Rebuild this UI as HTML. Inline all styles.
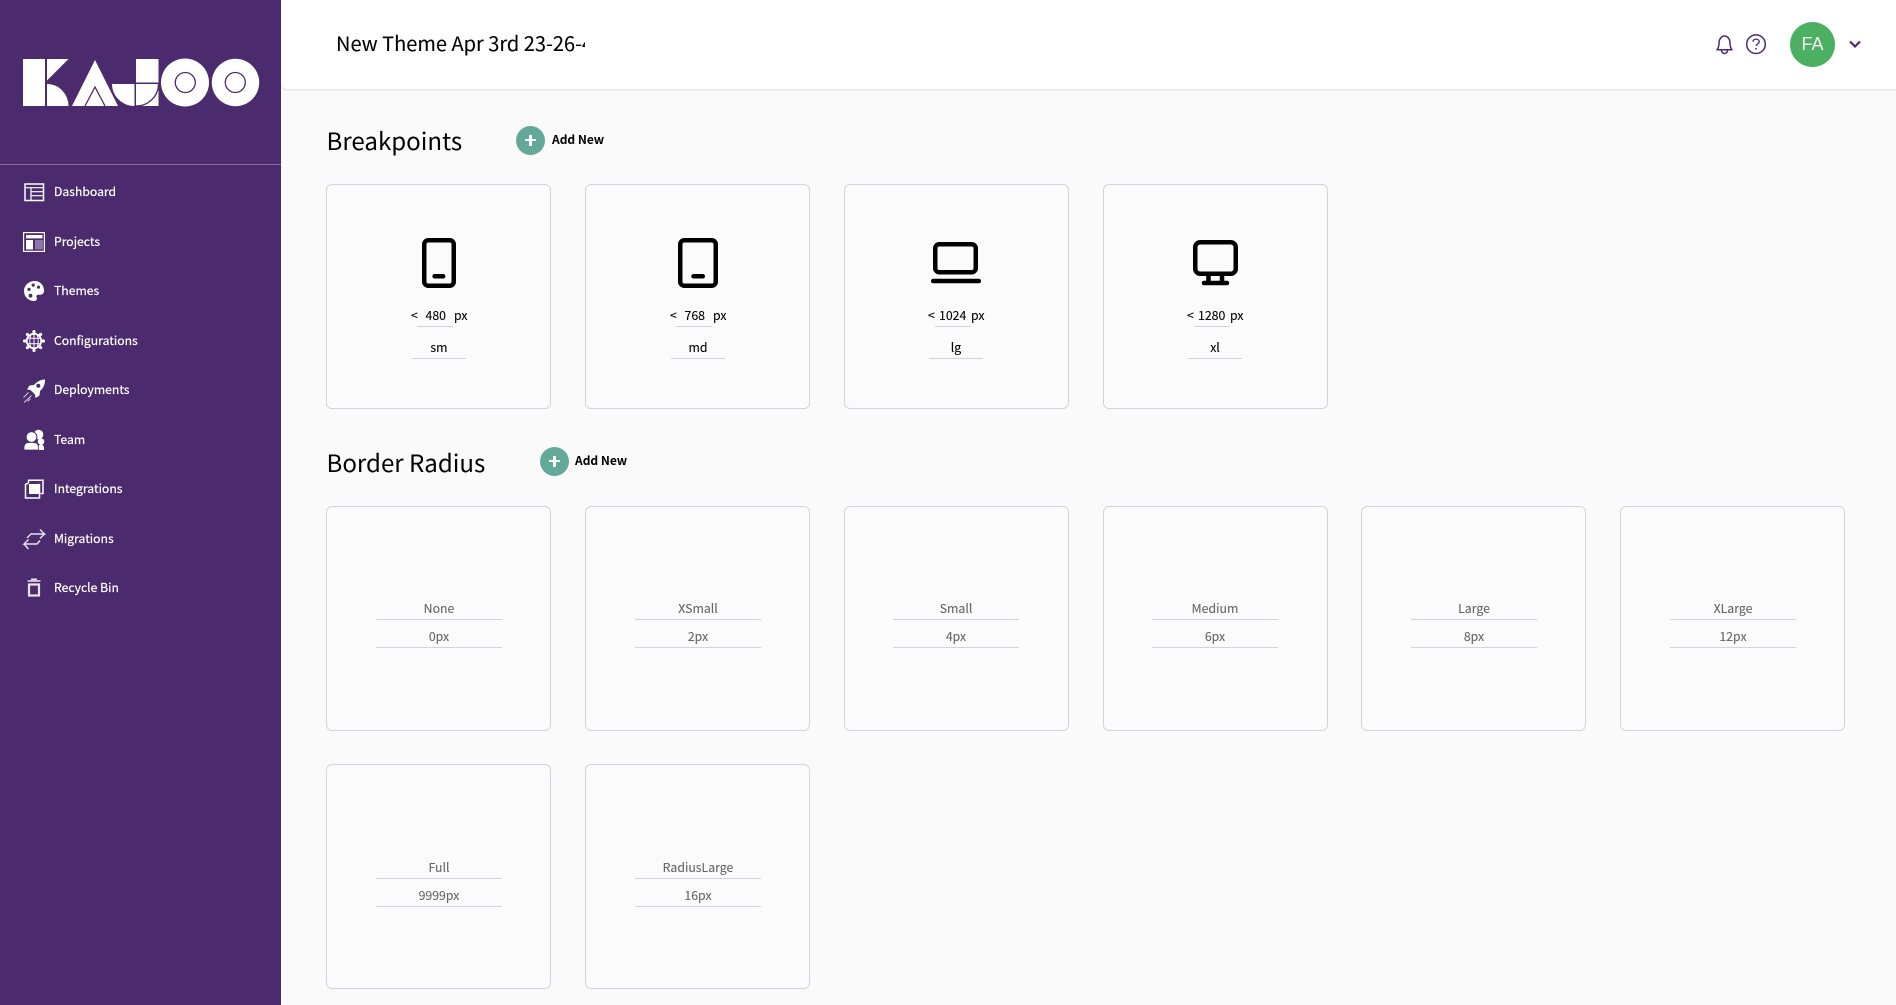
<!DOCTYPE html>
<html><head><meta charset="utf-8"><title>Theme</title>
<style>
*{box-sizing:border-box}
html,body{margin:0;padding:0;width:1896px;height:1005px;overflow:hidden;background:#fafafa;font-family:"Noto Sans CJK JP","Liberation Sans",sans-serif;color:#000}
.a{position:absolute}
#side{position:absolute;left:0;top:0;width:281px;height:1005px;background:#4b2a6d}
#head{position:absolute;left:281px;top:0;width:1615px;height:89px;background:#fff;border-bottom-left-radius:6px;box-shadow:0 1px 2px rgba(0,0,0,.12)}
.n{position:absolute;left:54px;color:#fff;font-size:12.2px;line-height:20px;white-space:nowrap;-webkit-text-stroke:.2px #fff}
.i{position:absolute;left:20px;width:28px;height:28px;overflow:visible}
.c{position:absolute;width:225px;height:225px;border:1px solid #d3d3de;border-radius:6px;background:#fbfbfc}
.t{position:absolute;left:326.5px;font-size:24.1px;line-height:36px;white-space:nowrap}
.ad{position:absolute;width:29px;height:29px;border-radius:50%;background:#62a99a}
.ad:before{content:"";position:absolute;left:9px;top:13.3px;width:11px;height:2.2px;background:#fff}
.ad:after{content:"";position:absolute;left:13.4px;top:9px;width:2.2px;height:11px;background:#fff}
.al{position:absolute;font-size:12px;font-weight:700;line-height:20px;white-space:nowrap}
.x{position:absolute;text-align:center;font-size:12.3px;line-height:20px;white-space:nowrap;-webkit-text-stroke:.1px currentColor}
.ln{position:absolute;height:1px;background:#d3d3de}
.g{color:#666;width:126px;font-size:12.3px}
</style></head><body>
<div id="side">
<svg class="a" style="left:0;top:0" width="281" height="130" viewBox="0 0 281 130">
<g fill="#fff">
<rect x="23" y="59" width="22" height="47"/>
<path d="M47 59H68.5L47 80.5Z"/>
<path d="M47 84A21.5 22 0 0 1 68.5 106H47Z"/>
<path d="M95 60L118 106H72Z"/>
<path d="M112 84H134.5V106A22.5 22 0 0 1 112 84Z"/>
<rect x="136" y="59" width="22.5" height="23.5"/>
<rect x="136" y="84" width="22.5" height="22"/>
<circle cx="185" cy="82.5" r="24"/>
<circle cx="235.5" cy="82.5" r="23.7"/>
</g>
<g fill="none" stroke="#4b2a6d" stroke-width="1.3">
<path d="M85 106L95 87L105 106"/>
<path d="M158.5 84A22.5 22 0 0 1 136 106"/>
<circle cx="185.3" cy="82.5" r="10"/>
<circle cx="235.3" cy="82.5" r="10"/>
</g>
</svg>
<div class="a" style="left:0;top:164px;width:281px;height:1px;background:rgba(255,255,255,.32)"></div>

<svg class="i" style="top:178px" viewBox="0 0 28 28" fill="none" stroke="#fff"><rect x="5" y="6" width="18.5" height="16.5" stroke-width="1.5"/><path d="M5 9.7H23.5M11 9.7V22.5M11 13.7H23.5M11 17.7H23.5" stroke-width="1.2"/></svg>
<div class="n" style="top:181px">Dashboard</div>

<svg class="i" style="top:228px" viewBox="0 0 28 28"><rect x="3.6" y="4.6" width="20.8" height="18.8" fill="none" stroke="#fff" stroke-width="1.2"/><rect x="6" y="7" width="16.5" height="3.4" fill="#fff"/><rect x="6" y="12" width="7" height="9.5" fill="#fff"/><rect x="15" y="12" width="8" height="9.5" fill="#8f76a8"/></svg>
<div class="n" style="top:231px">Projects</div>

<svg class="i" style="top:277px" viewBox="0 0 28 28"><path fill="#fff" fill-rule="evenodd" d="M14.5 4C20 4 24 8 24 13.5C24 17 21.5 18.2 19 17.8C17 17.5 15.8 18.6 16.6 20.4C17.4 22.4 16.5 24 14 24C8.5 24 4 19.5 4 14C4 8.5 8.8 4 14.5 4ZM9 10.8A1.6 1.6 0 1 0 9 14A1.6 1.6 0 1 0 9 10.8ZM13.2 6.5A1.6 1.6 0 1 0 13.2 9.7A1.6 1.6 0 1 0 13.2 6.5ZM18.5 8.5A1.6 1.6 0 1 0 18.5 11.7A1.6 1.6 0 1 0 18.5 8.5ZM10.5 16.8A1.9 1.9 0 1 0 10.5 20.6A1.9 1.9 0 1 0 10.5 16.8Z"/></svg>
<div class="n" style="top:280px">Themes</div>

<svg class="i" style="top:327px" viewBox="0 0 28 28" fill="none" stroke="#fff"><circle cx="14" cy="14" r="7.2" stroke-width="1.8"/><path d="M7 11.3H21M7 16.7H21M14 6.8V21.2" stroke-width="1"/><path d="M10.8 7.5C9.6 11.5 9.6 16.5 10.8 20.5M17.2 7.5C18.4 11.5 18.4 16.5 17.2 20.5" stroke-width="1"/><g stroke-width="3.2" stroke-linecap="round"><path d="M14 4.6V4.8M14 23.2V23.4M4.6 14H4.8M23.2 14H23.4M7.4 7.4L7.6 7.6M20.6 7.4L20.4 7.6M7.4 20.6L7.6 20.4M20.6 20.6L20.4 20.4"/></g></svg>
<div class="n" style="top:330px">Configurations</div>

<svg class="i" style="top:376px" viewBox="0 0 28 28"><path fill="#fff" fill-rule="evenodd" d="M25 3.5C25.2 8 23.5 12 20 15L19.5 19.5L15.5 22L15 18.5L10.5 14L7 13.5L9.5 9.5L14 9C17 5.5 21 3.5 25 3.5ZM18.3 7.8A2 2 0 1 0 18.3 11.8A2 2 0 1 0 18.3 7.8Z"/><path d="M8.5 16.5L3.5 21.5M11.5 19.5L4 26.5M10.5 22.5L7.5 25.5" stroke="#d6cbe0" stroke-width="1" fill="none"/></svg>
<div class="n" style="top:379px">Deployments</div>

<svg class="i" style="top:426px" viewBox="0 0 28 28"><g fill="#fff"><circle cx="18.5" cy="8.5" r="4.8"/><circle cx="21" cy="15.5" r="3.3"/><path d="M17 24H24C24.3 21 23.5 18.5 21 18.5C19 18.5 18 20 17 24Z"/></g><circle cx="11.5" cy="11" r="5.4" fill="#fff" stroke="#4b2a6d" stroke-width="1"/><path d="M4 24V21C4 18 6.5 16.5 9 16.5H13.5C16 16.5 18.5 18 18.5 21V24Z" fill="#fff" stroke="#4b2a6d" stroke-width=".8"/></svg>
<div class="n" style="top:429px">Team</div>

<svg class="i" style="top:475px" viewBox="0 0 28 28" fill="none" stroke="#fff" stroke-width="1.5"><path d="M8.5 8V5.3H23V18.5H20.5"/><path d="M19.5 8.7V23H5.5V9"/><rect x="9" y="9" width="10" height="10" fill="#fff" stroke="none"/><path d="M5.5 8.7H8.5"/></svg>
<div class="n" style="top:478px">Integrations</div>

<svg class="i" style="top:525px" viewBox="0 0 28 28" fill="none" stroke="#e8e2ee" stroke-width="1.4"><path d="M7 13L11 9H24.5L20 4.5M24.5 9L20 13.5"/><path d="M20 15.5L17 19H4L8.5 14.5M4 19L8.5 24"/></svg>
<div class="n" style="top:528px">Migrations</div>

<svg class="i" style="top:574px" viewBox="0 0 28 28" fill="none" stroke="#e8e2ee"><path d="M7.5 7H20.5M11 5.3H17" stroke-width="1.6"/><path d="M9 10.5V21.5H19V10.5Z" stroke-width="2.2"/></svg>
<div class="n" style="top:577px">Recycle Bin</div>
</div>

<div id="head"></div>
<div class="a" style="left:336px;top:26px;width:249px;height:34px;overflow:hidden;font-size:20px;line-height:34px;white-space:nowrap;-webkit-text-stroke:.1px #000">New Theme Apr 3rd 23-26-43</div>
<svg class="a" style="left:1712px;top:30px" width="60" height="30" viewBox="0 0 60 30" fill="none" stroke="#4b2a6d" stroke-width="1.5"><path d="M5 19.8C6.5 18 7 16.5 7 13C7 9 9.5 6 12.5 6C15.5 6 18 9 18 13C18 16.5 18.5 18 20 19.8Z" stroke-linejoin="round"/><path d="M9.5 20.5A3 3 0 0 0 15.5 20.5"/><circle cx="44" cy="14.2" r="9.3"/><path d="M41 11.7C41 8.2 47.2 8.3 47.2 11.8C47.2 14 44.2 13.9 44.2 16" stroke-width="1.3"/><circle cx="44" cy="18.8" r=".9" fill="#4b2a6d" stroke="none"/></svg>
<div class="a" style="left:1790px;top:22px;width:45px;height:45px;border-radius:50%;background:#4cb063;color:#f4f4f4;text-align:center;font:18px/45px 'Liberation Sans',sans-serif">FA</div>
<svg class="a" style="left:1848px;top:38px" width="14" height="12" viewBox="0 0 14 12" fill="none" stroke="#4b2a6d" stroke-width="2.2"><path d="M2 3.5L7 8.5L12 3.5"/></svg>

<div class="t" style="top:122px">Breakpoints</div>
<div class="ad" style="left:516px;top:126px"></div><div class="al" style="left:552px;top:130px">Add New</div>

<div class="c" style="left:326px;top:184px"></div>
<div class="c" style="left:585px;top:184px"></div>
<div class="c" style="left:844px;top:184px"></div>
<div class="c" style="left:1103px;top:184px"></div>

<svg class="a" style="left:420px;top:236px" width="38" height="54" viewBox="0 0 38 54" fill="none" stroke="#000"><rect x="4.25" y="4.25" width="29.5" height="45.5" rx="4" stroke-width="4.5"/><path d="M14.6 40.3H23.2" stroke-width="4.5" stroke-linecap="round"/></svg>
<svg class="a" style="left:676px;top:236px" width="44" height="54" viewBox="0 0 44 54" fill="none" stroke="#000"><rect x="4.25" y="4.25" width="35.5" height="45.5" rx="4" stroke-width="4.5"/><path d="M17.5 40.3H26.8" stroke-width="4.5" stroke-linecap="round"/></svg>
<svg class="a" style="left:929px;top:240px" width="54" height="46" viewBox="0 0 54 46" fill="none" stroke="#000"><rect x="6.25" y="4.25" width="40.5" height="28" rx="4" stroke-width="4.5"/><path d="M4.2 41H49.8" stroke-width="4.5" stroke-linecap="round"/></svg>
<svg class="a" style="left:1191px;top:238px" width="50" height="50" viewBox="0 0 50 50" fill="none" stroke="#000"><rect x="4.25" y="4.25" width="40.5" height="31.5" rx="5" stroke-width="4.5"/><path d="M17.5 37V45M31 37V45" stroke-width="4.5"/><path d="M13 45H36" stroke-width="4.5" stroke-linecap="round"/></svg>

<div class="x" style="left:411px;top:305px">&lt;</div><div class="x" style="left:425.5px;top:305px">480</div><div class="x" style="left:454px;top:305px">px</div><div class="ln" style="left:417px;top:326px;width:36px"></div>
<div class="x" style="left:412px;top:337px;width:54px">sm</div><div class="ln" style="left:412px;top:358px;width:54px"></div>

<div class="x" style="left:670px;top:305px">&lt;</div><div class="x" style="left:684.5px;top:305px">768</div><div class="x" style="left:713px;top:305px">px</div><div class="ln" style="left:676px;top:326px;width:36px"></div>
<div class="x" style="left:671px;top:337px;width:54px">md</div><div class="ln" style="left:671px;top:358px;width:54px"></div>

<div class="x" style="left:928px;top:305px">&lt;</div><div class="x" style="left:939px;top:305px">1024</div><div class="x" style="left:971px;top:305px">px</div><div class="ln" style="left:935px;top:326px;width:36px"></div>
<div class="x" style="left:929px;top:337px;width:54px">lg</div><div class="ln" style="left:929px;top:358px;width:54px"></div>

<div class="x" style="left:1187px;top:305px">&lt;</div><div class="x" style="left:1198px;top:305px">1280</div><div class="x" style="left:1230px;top:305px">px</div><div class="ln" style="left:1194px;top:326px;width:36px"></div>
<div class="x" style="left:1188px;top:337px;width:54px">xl</div><div class="ln" style="left:1188px;top:358px;width:54px"></div>

<div class="t" style="top:444px">Border Radius</div>
<div class="ad" style="left:540px;top:447px"></div><div class="al" style="left:575px;top:451px">Add New</div>

<div class="c" style="left:326px;top:506px"></div>
<div class="c" style="left:585px;top:506px"></div>
<div class="c" style="left:844px;top:506px"></div>
<div class="c" style="left:1103px;top:506px"></div>
<div class="c" style="left:1361px;top:506px"></div>
<div class="c" style="left:1620px;top:506px"></div>
<div class="c" style="left:326px;top:764px"></div>
<div class="c" style="left:585px;top:764px"></div>

<div class="x g" style="left:376px;top:598px">None</div><div class="ln" style="left:376px;top:619px;width:126px"></div><div class="x g" style="left:376px;top:626px">0px</div><div class="ln" style="left:376px;top:647px;width:126px"></div>
<div class="x g" style="left:635px;top:598px">XSmall</div><div class="ln" style="left:635px;top:619px;width:126px"></div><div class="x g" style="left:635px;top:626px">2px</div><div class="ln" style="left:635px;top:647px;width:126px"></div>
<div class="x g" style="left:893px;top:598px">Small</div><div class="ln" style="left:893px;top:619px;width:126px"></div><div class="x g" style="left:893px;top:626px">4px</div><div class="ln" style="left:893px;top:647px;width:126px"></div>
<div class="x g" style="left:1152px;top:598px">Medium</div><div class="ln" style="left:1152px;top:619px;width:126px"></div><div class="x g" style="left:1152px;top:626px">6px</div><div class="ln" style="left:1152px;top:647px;width:126px"></div>
<div class="x g" style="left:1411px;top:598px">Large</div><div class="ln" style="left:1411px;top:619px;width:126px"></div><div class="x g" style="left:1411px;top:626px">8px</div><div class="ln" style="left:1411px;top:647px;width:126px"></div>
<div class="x g" style="left:1670px;top:598px">XLarge</div><div class="ln" style="left:1670px;top:619px;width:126px"></div><div class="x g" style="left:1670px;top:626px">12px</div><div class="ln" style="left:1670px;top:647px;width:126px"></div>
<div class="x g" style="left:376px;top:857px">Full</div><div class="ln" style="left:376px;top:878px;width:126px"></div><div class="x g" style="left:376px;top:885px">9999px</div><div class="ln" style="left:376px;top:906px;width:126px"></div>
<div class="x g" style="left:635px;top:857px">RadiusLarge</div><div class="ln" style="left:635px;top:878px;width:126px"></div><div class="x g" style="left:635px;top:885px">16px</div><div class="ln" style="left:635px;top:906px;width:126px"></div>
</body></html>
